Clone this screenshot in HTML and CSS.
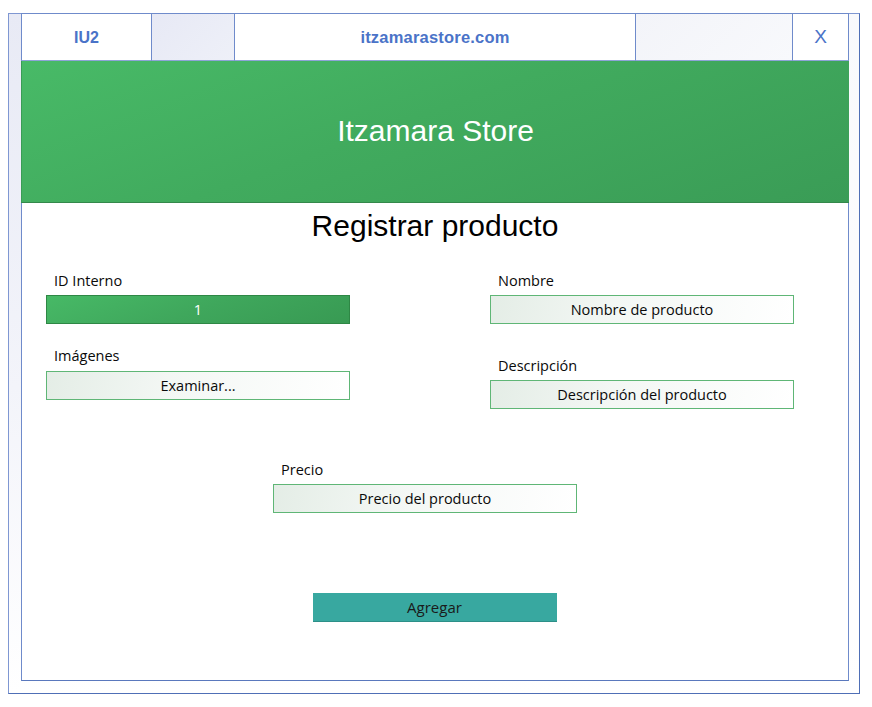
FILE: index.html
```html
<!DOCTYPE html>
<html lang="es">
<head>
<meta charset="utf-8">
<title>Itzamara Store - Registrar producto</title>
<link rel="stylesheet" href="styles.css">
</head>
<body>
<div class="outer">
  <div class="window">
    <div class="topbar">
      <div class="cell c1">IU2</div>
      <div class="cell c2"></div>
      <div class="cell c3">itzamarastore.com</div>
      <div class="cell c4"></div>
      <div class="cell c5">X</div>
    </div>
    <header class="banner">Itzamara Store</header>
    <h1 class="title">Registrar producto</h1>
    <div class="form">
      <div class="col col-left">
        <div class="label">ID Interno</div>
        <div class="field field-green">1</div>
        <div class="label label-2">Imágenes</div>
        <div class="field">Examinar...</div>
      </div>
      <div class="col col-right">
        <div class="label">Nombre</div>
        <div class="field">Nombre de producto</div>
        <div class="label label-3">Descripción</div>
        <div class="field">Descripción del producto</div>
      </div>
    </div>
    <div class="price">
      <div class="label">Precio</div>
      <div class="field">Precio del producto</div>
    </div>
    <div class="actions">
      <div class="button">Agregar</div>
    </div>
  </div>
</div>
</body>
</html>
```
FILE: styles.css
```css
html, body {
  margin: 0;
  padding: 0;
  background: #ffffff;
}
body {
  padding: 13px 0 0 8px;
}
.outer {
  width: 852px;
  height: 681px;
  box-sizing: border-box;
  border: 1px solid #4f6fb6;
  border-left-color: #7f97d2;
  border-top-color: #7f97d2;
  background:
    linear-gradient(to right, rgba(255,255,255,0) 0%, rgba(255,255,255,0.75) 100%),
    linear-gradient(to bottom, #e8eaf5 0%, #f3f4fa 55%, #ffffff 100%);
  padding: 0 11px 0 12px;
}
.window {
  width: 828px;
  height: 668px;
  margin-top: -1px;
  box-sizing: border-box;
  border: 1px solid #6f8bcb;
  border-top: none;
  border-bottom-color: #5a78bd;
  background: #ffffff;
  display: flex;
  flex-direction: column;
}
.topbar {
  display: flex;
  height: 48px;
  box-sizing: border-box;
  margin: 0 -1px;
}
.cell {
  box-sizing: border-box;
  height: 48px;
  border: 1px solid #6f8bcb;
  border-right: none;
  border-bottom-color: #8ea3d8;
  display: flex;
  align-items: center;
  justify-content: center;
  font-family: "Liberation Sans", Arial, sans-serif;
  font-weight: bold;
  font-size: 16px;
  color: #4a73c8;
  background: #ffffff;
}
.c1 { width: 130px; padding-top: 1px; }
.c2 { width: 83px; background: linear-gradient(135deg, #e7e9f5, #eef0f8); }
.c3 { width: 401px; font-size: 16.5px; letter-spacing: 0.2px; }
.c4 { width: 157px; background: linear-gradient(135deg, #f3f4f9, #f8f9fc); }
.c5 { width: 57px; border-right: 1px solid #6f8bcb; font-weight: normal; font-size: 19px; }
.banner {
  height: 142px;
  box-sizing: border-box;
  margin: 0 -1px;
  background: linear-gradient(160deg, #48ba67 0%, #41ab5e 45%, #3a9c56 100%);
  border-bottom: 1px solid #34884b;
  border-left: 1px solid #3a9c56;
  color: #ffffff;
  font-family: "Liberation Sans", Arial, sans-serif;
  font-size: 30px;
  display: flex;
  align-items: center;
  justify-content: center;
  padding-bottom: 2px;
}
.title {
  margin: 6px 0 0;
  font-family: "Liberation Sans", Arial, sans-serif;
  font-weight: normal;
  font-size: 30px;
  line-height: 34px;
  text-align: center;
  color: #000000;
}
.form {
  display: flex;
  gap: 140px;
  padding-left: 24px;
  margin-top: 29px;
}
.col {
  display: flex;
  flex-direction: column;
  width: 304px;
}
.label {
  font-family: "Open Sans", "Noto Sans", sans-serif;
  font-size: 14.5px;
  line-height: 17px;
  color: #0a0a0a;
  padding-left: 8px;
  margin-bottom: 6px;
}
.label-2 { margin-top: 23px; margin-bottom: 7px; }
.label-3 { margin-top: 33px; }
.field {
  box-sizing: border-box;
  height: 29px;
  border: 1px solid #5fb676;
  background: linear-gradient(100deg, #e4ede6 0%, #f3f7f4 40%, #ffffff 100%);
  display: flex;
  align-items: center;
  justify-content: center;
  font-family: "Open Sans", "Noto Sans", sans-serif;
  font-size: 14.5px;
  color: #0a0a0a;
}
.field-green {
  background: linear-gradient(160deg, #47b966 0%, #3fa75c 50%, #389a53 100%);
  border-color: #2e8745;
  color: #ffffff;
}
.price {
  width: 304px;
  margin: 52px 0 0 251px;
  display: flex;
  flex-direction: column;
}
.actions {
  display: flex;
  justify-content: center;
  margin-top: 80px;
  padding-right: 1px;
}
.button {
  width: 244px;
  height: 29px;
  box-sizing: border-box;
  background: #38a8a0;
  border-bottom: 1px solid #2d8f88;
  display: flex;
  align-items: center;
  justify-content: center;
  font-family: "Open Sans", "Noto Sans", sans-serif;
  font-size: 15px;
  color: #1a1a1a;
}
```
